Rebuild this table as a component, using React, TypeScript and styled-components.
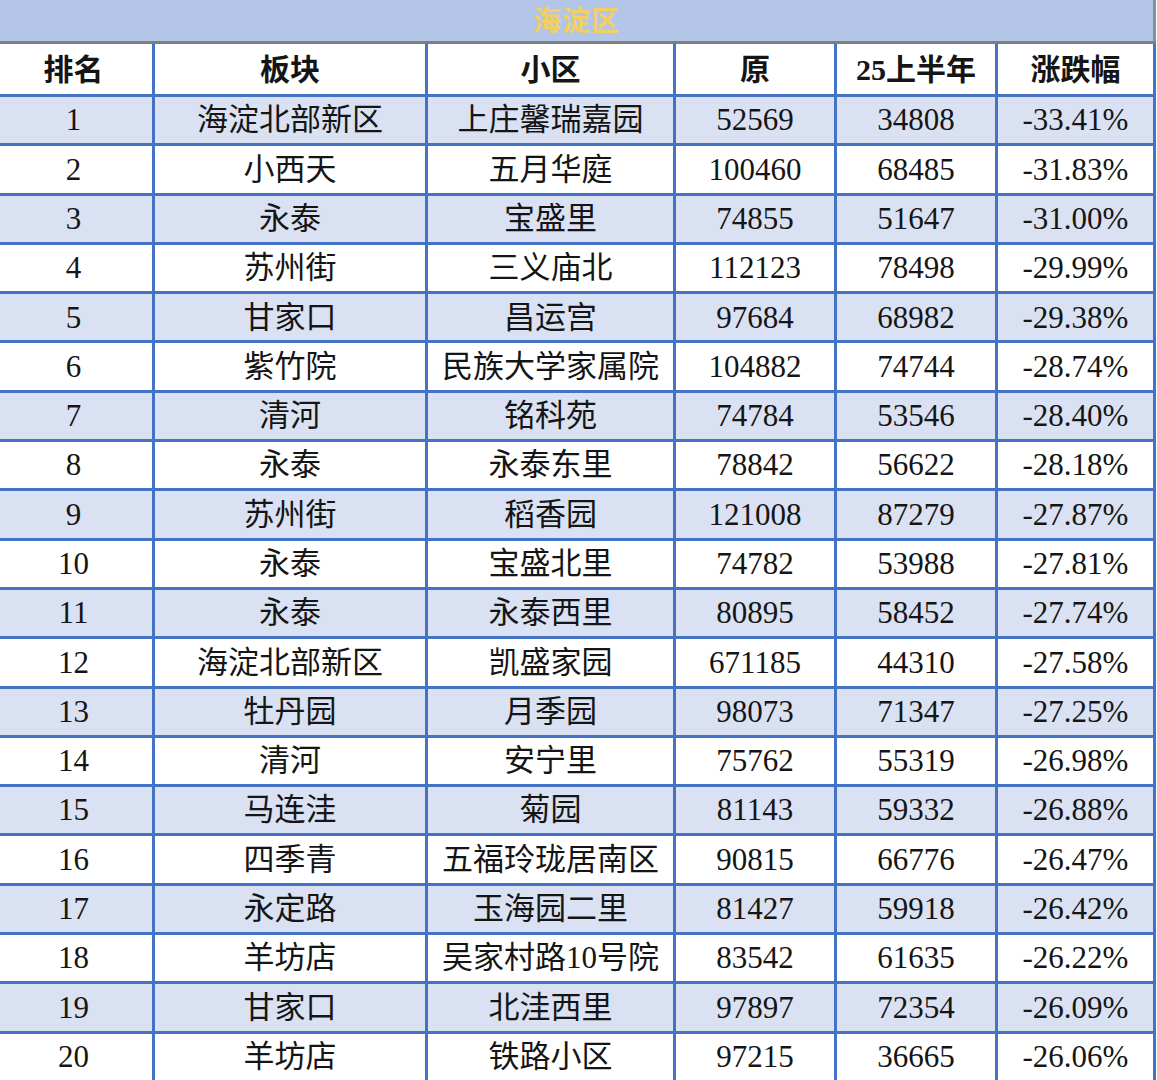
import React from "react";
import styled, { createGlobalStyle } from "styled-components";

const Global = createGlobalStyle`
  html, body { margin: 0; padding: 0; background: #ffffff; }
  body { font-family: "Liberation Serif", "Noto Sans CJK SC", sans-serif; color: #151515; }
`;

const Sheet = styled.div`
  width: 1156px;
  overflow: hidden;
`;

const TitleBar = styled.div`
  height: 41px;
  box-sizing: border-box;
  background: #b4c6e7;
  border-right: 3px solid #8a8f99;
  display: flex;
  align-items: center;
  justify-content: center;
  padding-bottom: 3px;
  font-family: "Noto Sans CJK SC", sans-serif;
  font-weight: 700;
  font-size: 28px;
  line-height: 34px;
  color: #f3cf62;
  letter-spacing: 1px;
`;

const TitleRule = styled.div`
  height: 3px;
  background: #7f7f7f;
`;

const COLS = "155px 273px 248px 161px 161px 158px";

const Row = styled.div<{ $shade: boolean; $head?: boolean }>`
  display: grid;
  grid-template-columns: ${COLS};
  height: ${(p) => (p.$head ? "53px" : "49.3px")};
  box-sizing: border-box;
  border-bottom: 3px solid #4472c4;
  background: ${(p) => (p.$shade ? "#d9e1f2" : "#ffffff")};
`;

const Cell = styled.div<{ $head?: boolean; $rank?: boolean }>`
  box-sizing: border-box;
  border-right: 3px solid #4472c4;
  display: flex;
  align-items: center;
  justify-content: center;
  font-size: ${(p) => (p.$head ? "30px" : "31px")};
  font-weight: ${(p) => (p.$head ? 700 : 400)};
  white-space: nowrap;
  line-height: 1.15;
  padding-top: ${(p) => (p.$head ? "2px" : "0")};
  padding-right: ${(p) => (p.$rank ? "5px" : "0")};
`;

const headers = ["排名", "板块", "小区", "原", "25上半年", "涨跌幅"];

const data: [string, string, string, string, string][] = [
  ["海淀北部新区", "上庄馨瑞嘉园", "52569", "34808", "-33.41%"],
  ["小西天", "五月华庭", "100460", "68485", "-31.83%"],
  ["永泰", "宝盛里", "74855", "51647", "-31.00%"],
  ["苏州街", "三义庙北", "112123", "78498", "-29.99%"],
  ["甘家口", "昌运宫", "97684", "68982", "-29.38%"],
  ["紫竹院", "民族大学家属院", "104882", "74744", "-28.74%"],
  ["清河", "铭科苑", "74784", "53546", "-28.40%"],
  ["永泰", "永泰东里", "78842", "56622", "-28.18%"],
  ["苏州街", "稻香园", "121008", "87279", "-27.87%"],
  ["永泰", "宝盛北里", "74782", "53988", "-27.81%"],
  ["永泰", "永泰西里", "80895", "58452", "-27.74%"],
  ["海淀北部新区", "凯盛家园", "671185", "44310", "-27.58%"],
  ["牡丹园", "月季园", "98073", "71347", "-27.25%"],
  ["清河", "安宁里", "75762", "55319", "-26.98%"],
  ["马连洼", "菊园", "81143", "59332", "-26.88%"],
  ["四季青", "五福玲珑居南区", "90815", "66776", "-26.47%"],
  ["永定路", "玉海园二里", "81427", "59918", "-26.42%"],
  ["羊坊店", "吴家村路10号院", "83542", "61635", "-26.22%"],
  ["甘家口", "北洼西里", "97897", "72354", "-26.09%"],
  ["羊坊店", "铁路小区", "97215", "36665", "-26.06%"],
];

export default function App() {
  return (
    <>
      <Global />
      <Sheet>
        <TitleBar>海淀区</TitleBar>
        <TitleRule />
        <Row $shade={false} $head>
          {headers.map((h, k) => (
            <Cell key={h} $head $rank={k === 0}>
              {h}
            </Cell>
          ))}
        </Row>
        {data.map((r, i) => (
          <Row key={i} $shade={i % 2 === 0}>
            <Cell $rank>{i + 1}</Cell>
            {r.map((v, j) => (
              <Cell key={j}>{v}</Cell>
            ))}
          </Row>
        ))}
      </Sheet>
    </>
  );
}
